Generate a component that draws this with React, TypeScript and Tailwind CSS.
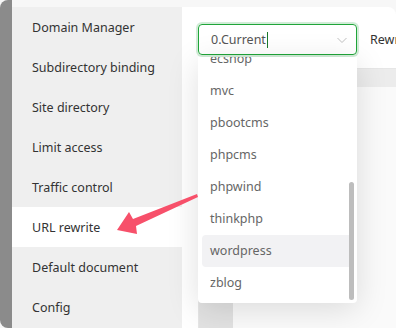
const menu = [
  'Domain Manager',
  'Subdirectory binding',
  'Site directory',
  'Limit access',
  'Traffic control',
  'URL rewrite',
  'Default document',
  'Config',
]

const options = ['ecshop', 'mvc', 'pbootcms', 'phpcms', 'phpwind', 'thinkphp', 'wordpress', 'zblog']

export default function App() {
  return (
    <div
      className="relative flex h-[328px] w-[396px] overflow-hidden bg-[#f7f7f7] text-[12.5px]"
      style={{ fontFamily: '"Noto Sans", "Open Sans", sans-serif' }}
    >
      <div className="h-full w-3 shrink-0 rounded-l-lg bg-[#8b8b8b]" />

      <div className="flex min-w-0 flex-1 flex-col pt-[7px]">
        <div className="flex flex-1">
          <div className="flex w-[170px] shrink-0 flex-col bg-[#efefef]">
            {menu.map(item => (
              <div
                key={item}
                className={'flex h-10 items-center pl-5 pt-[3px] text-[#333] ' + (item === 'URL rewrite' ? 'bg-white' : '')}
              >
                {item}
              </div>
            ))}
          </div>

          <div className="flex min-w-0 flex-1 flex-col overflow-hidden rounded-tr-lg bg-white pl-4 pt-[17px]">
            <div className="flex items-center">
              <div className="flex h-[31px] w-[159px] shrink-0 items-center justify-between rounded border border-[#20a53a] pl-3 pr-2 ring-2 ring-[#20a53a]/20">
                <div className="flex items-center pt-px text-[#555]">
                  0.Current
                  <span className="ml-px h-4 w-px bg-[#1a7a2c]" />
                </div>
                <svg width="12" height="12" viewBox="0 0 12 12" fill="none" stroke="#c0c0c0" strokeWidth="1">
                  <path d="M1.5 4l4.5 4.5 4.5-4.5" />
                </svg>
              </div>
              <div className="ml-[13px] whitespace-nowrap pt-px text-[#333]">Rewrite rule conversion</div>
            </div>

            <div className="mt-[13px] flex flex-1 flex-col border-l border-t border-[#e6e6e6]">
              <div className="h-[18px] bg-[#ececec]" />
              <div className="flex flex-1">
                <div className="w-[34px] bg-[#e2e2e2]" />
                <div className="flex-1 bg-[#fafafa]" />
              </div>
            </div>
          </div>
        </div>
      </div>

      <div className="absolute left-[198px] top-[57px] h-[246px] w-[159px] overflow-hidden rounded-b bg-white shadow-[0_6px_32px_rgba(0,0,0,0.13)]">
        <div className="-mt-[14px] flex flex-col px-1">
          {options.map(opt => (
            <div
              key={opt}
              className={'flex h-8 items-center rounded pl-2 pt-px text-[#666] ' + (opt === 'wordpress' ? 'bg-[#f2f2f4]' : '')}
            >
              {opt}
            </div>
          ))}
        </div>
        <div className="absolute right-[3px] top-[125px] h-[118px] w-[5px] rounded-full bg-[#bdbdbd]" />
      </div>

      <svg className="pointer-events-none absolute left-0 top-0" width="396" height="328" viewBox="0 0 396 328">
        <polygon
          points="117,230 129,212 133,219 197,194 198,197 136,226 137,234"
          fill="#f7506a"
        />
      </svg>
    </div>
  )
}
